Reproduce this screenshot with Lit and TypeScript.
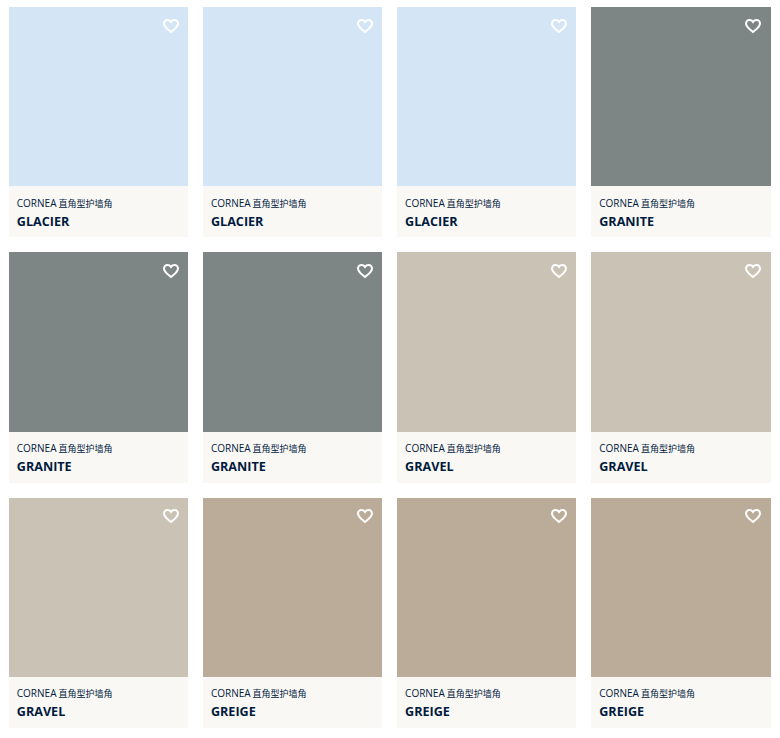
import { LitElement, html, css } from "lit";
import { customElement } from "lit/decorators.js";

const items: [string, string][] = [
  ["GLACIER", "#d4e6f6"], ["GLACIER", "#d4e6f6"], ["GLACIER", "#d4e6f6"], ["GRANITE", "#7e8585"],
  ["GRANITE", "#7e8585"], ["GRANITE", "#7e8585"], ["GRAVEL", "#cac2b5"], ["GRAVEL", "#cac2b5"],
  ["GRAVEL", "#cac2b5"], ["GREIGE", "#baac98"], ["GREIGE", "#baac98"], ["GREIGE", "#baac98"],
];

@customElement("app-root")
export class AppRoot extends LitElement {
  static styles = css`
    :host { display: block; background: #fff; font-family: "Open Sans", "Noto Sans CJK SC", sans-serif; color: #001a3d; }
    .grid { display: grid; grid-template-columns: repeat(4, 1fr); gap: 15px; padding: 7.1px 9.4px 0 9px; }
    .swatch { aspect-ratio: 1; display: flex; justify-content: flex-end; align-items: flex-start; padding: 10.5px 9.3px 0 0; box-sizing: border-box; }
    .heart { width: 16px; height: 16px; display: block; fill: none; stroke: #fff; stroke-width: 2; }
    .info { height: 51.2px; box-sizing: border-box; background: #faf8f5; padding: 9.5px 8px 0 7.8px; }
    .sub { font-size: 10px; line-height: 15px; white-space: nowrap; word-spacing: -0.6px; }
    .cjk { font-size: 9px; }
    .name { font-size: 12.6px; font-weight: 700; line-height: 18px; margin-top: 1.8px; }
  `;
  render() {
    return html`<div class="grid">
      ${items.map(([n, c]) => html`<div class="card">
        <div class="swatch" style="background:${c}">
          <svg class="heart" viewBox="0 0 16 16"><path d="M8 14C4.8 11.3 1 8.8 1 5.4 1 3.4 2.6 2 4.4 2 5.8 2 7.2 2.7 8 3.9 8.8 2.7 10.2 2 11.6 2 13.4 2 15 3.4 15 5.4 15 8.8 11.2 11.3 8 14Z"/></svg>
        </div>
        <div class="info"><div class="sub">CORNEA <span class="cjk">直角型护墙角</span></div><div class="name">${n}</div></div>
      </div>`)}
    </div>`;
  }
}
